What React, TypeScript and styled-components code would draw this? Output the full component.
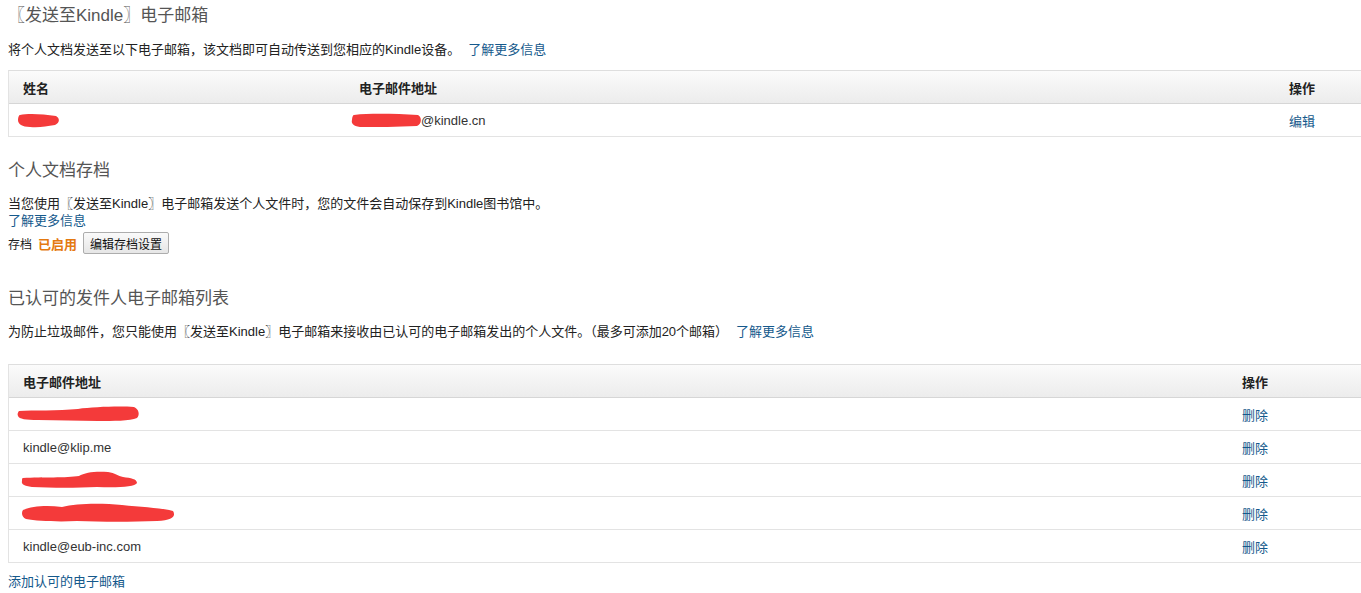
import React from "react";
import styled, { createGlobalStyle } from "styled-components";

const GlobalStyle = createGlobalStyle`
  html, body {
    margin: 0;
    padding: 0;
    background: #fff;
  }
  body {
    font-family: "Liberation Sans", "Noto Sans CJK SC", sans-serif;
    font-size: 13px;
    color: #333;
  }
`;

const Page = styled.div`
  padding: 6px 0 0 8px;
  width: 1353px;
  overflow: hidden;
`;

const SectionTitle = styled.h2<{ $top?: number }>`
  margin: ${(p) => p.$top ?? 0}px 0 0;
  font-size: 17px;
  font-weight: normal;
  line-height: 20px;
  color: #555;
`;

const Text = styled.p<{ $top?: number }>`
  margin: ${(p) => p.$top ?? 0}px 0 0;
  line-height: 17px;
  color: #222;
`;

const Link = styled.a`
  color: #15598c;
  text-decoration: none;
  cursor: pointer;
`;

const InlineLink = styled(Link)`
  margin-left: 8px;
`;

const BlockLink = styled(Link)<{ $top?: number }>`
  display: block;
  margin-top: ${(p) => p.$top ?? 0}px;
  line-height: 17px;
`;

const ArchiveRow = styled.div`
  display: flex;
  align-items: center;
  gap: 6px;
  margin-top: 3px;
  font-size: 12px;
  color: #222;
`;

const Enabled = styled.span`
  color: #e47911;
  font-size: 13px;
  font-weight: bold;
`;

const Button = styled.button`
  height: 22px;
  padding: 0 6px;
  border: 1px solid #adadad;
  border-radius: 2px;
  background: linear-gradient(#fafafa, #e6e6e6);
  font-family: inherit;
  font-size: 12px;
  color: #111;
  cursor: pointer;
`;

const Table = styled.div<{ $top?: number }>`
  margin-top: ${(p) => p.$top ?? 0}px;
  border-left: 1px solid #e3e3e3;
  border-top: 1px solid #dedede;
  width: 1360px;
`;

const Row = styled.div<{ $cols: string; $head?: boolean }>`
  display: grid;
  grid-template-columns: ${(p) => p.$cols};
  align-items: center;
  height: 32px;
  border-bottom: 1px solid ${(p) => (p.$head ? "#d6d6d6" : "#e3e3e3")};
  background: ${(p) => (p.$head ? "linear-gradient(#fbfbfb, #ececec)" : "#fff")};
  font-weight: ${(p) => (p.$head ? "bold" : "normal")};
  color: ${(p) => (p.$head ? "#222" : "#333")};
`;

const Cell = styled.div`
  padding-left: 14px;
  white-space: nowrap;
  display: flex;
  align-items: center;
`;

const Scribble = styled.svg<{ $shift?: number; $w: number; $h: number }>`
  display: block;
  width: ${(p) => p.$w}px;
  height: ${(p) => p.$h}px;
  min-height: ${(p) => p.$h}px;
  margin-left: ${(p) => p.$shift ?? 0}px;
  flex-shrink: 0;
  overflow: visible;
`;

type BlotProps = { w: number; h: number; shift?: number; d: string };

const Blot: React.FC<BlotProps> = ({ w, h, shift, d }) => (
  <Scribble
    $shift={shift}
    $w={w}
    $h={h}
    viewBox={`0 0 ${w} ${h}`}
    preserveAspectRatio="none"
  >
    <path d={d} fill="#f43a3a" />
  </Scribble>
);

const COLS1 = "336px 930px 1fr";
const COLS2 = "1219px 1fr";

const senders: { email?: string; blot?: BlotProps }[] = [
  {
    blot: {
      w: 121,
      h: 14,
      shift: -5,
      d: "M1 4 C15 3 40 4 60 2 C75 0 100 -1 116 0 C121 2 122 8 119 11 C112 14 95 14 80 14 C60 14 40 13 20 13 C8 13 1 12 0 9 C-1 7 0 5 1 4 Z",
    },
  },
  { email: "kindle@klip.me" },
  {
    blot: {
      w: 115,
      h: 16,
      shift: -1,
      d: "M1 6 C20 5 45 6 57 4 C63 0 75 -1 86 0 C93 1 96 4 101 5 C109 6 115 7 115 11 C113 15 95 16 75 15 C55 16 30 16 10 15 C2 14 -1 12 0 9 C0 7 0 6 1 6 Z",
    },
  },
  {
    blot: {
      w: 152,
      h: 18,
      shift: -1,
      d: "M1 6 C10 2 25 1 40 3 C55 -1 80 -1 100 1 C120 3 140 4 151 7 C154 12 151 16 135 17 C110 18 80 18 55 17 C35 18 15 17 4 15 C0 13 -1 9 1 6 Z",
    },
  },
  { email: "kindle@eub-inc.com" },
];

const App: React.FC = () => {
  return (
    <>
      <GlobalStyle />
      <Page>
        <SectionTitle>〖发送至Kindle〗电子邮箱</SectionTitle>
        <Text $top={15}>
          将个人文档发送至以下电子邮箱，该文档即可自动传送到您相应的Kindle设备。
          <InlineLink>了解更多信息</InlineLink>
        </Text>

        <Table $top={12}>
          <Row $cols={COLS1} $head>
            <Cell>姓名</Cell>
            <Cell>电子邮件地址</Cell>
            <Cell>操作</Cell>
          </Row>
          <Row $cols={COLS1}>
            <Cell>
              <Blot
                w={41}
                h={13}
                shift={-5}
                d="M2 1 C10 -1 25 0 38 2 C42 4 42 9 37 11 C28 12 22 14 12 13 C4 13 0 10 0 6 C0 3 1 1 2 1 Z"
              />
            </Cell>
            <Cell>
              <Blot
                w={69}
                h={13}
                shift={-7}
                d="M2 1 C20 -1 45 0 66 1 C70 3 70 10 65 12 C45 13 25 13 8 13 C1 12 -1 9 0 6 C0 3 1 1 2 1 Z"
              />
              <span>@kindle.cn</span>
            </Cell>
            <Cell>
              <Link>编辑</Link>
            </Cell>
          </Row>
        </Table>

        <SectionTitle $top={24}>个人文档存档</SectionTitle>
        <Text $top={14}>
          当您使用〖发送至Kindle〗电子邮箱发送个人文件时，您的文件会自动保存到Kindle图书馆中。
        </Text>
        <BlockLink>了解更多信息</BlockLink>
        <ArchiveRow>
          <span>存档</span>
          <Enabled>已启用</Enabled>
          <Button>编辑存档设置</Button>
        </ArchiveRow>

        <SectionTitle $top={35}>已认可的发件人电子邮箱列表</SectionTitle>
        <Text $top={14}>
          为防止垃圾邮件，您只能使用〖发送至Kindle〗电子邮箱来接收由已认可的电子邮箱发出的个人文件。（最多可添加20个邮箱）
          <InlineLink>了解更多信息</InlineLink>
        </Text>

        <Table $top={24}>
          <Row $cols={COLS2} $head>
            <Cell>电子邮件地址</Cell>
            <Cell>操作</Cell>
          </Row>
          {senders.map((s, i) => (
            <Row $cols={COLS2} key={i}>
              <Cell>{s.blot ? <Blot {...s.blot} /> : s.email}</Cell>
              <Cell>
                <Link>删除</Link>
              </Cell>
            </Row>
          ))}
        </Table>

        <BlockLink $top={10}>添加认可的电子邮箱</BlockLink>
      </Page>
    </>
  );
};

export default App;
